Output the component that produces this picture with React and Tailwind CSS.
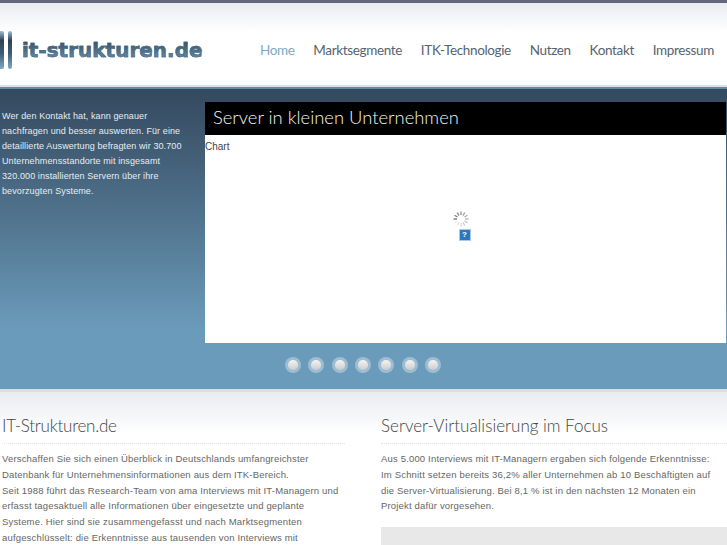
const navItems = ["Home", "Marktsegmente", "ITK-Technologie", "Nutzen", "Kontakt", "Impressum"]
const dots = [0, 1, 2, 3, 4, 5, 6]

const Logo = () => (
  <div className="flex items-center h-[40px]">
    <svg width="16" height="40" viewBox="0 0 16 40" className="shrink-0">
      <defs>
        <linearGradient id="bar" x1="0" y1="0" x2="0" y2="1">
          <stop offset="0" stopColor="#9cc0da" />
          <stop offset="0.25" stopColor="#2f4154" />
          <stop offset="0.6" stopColor="#3f5f78" />
          <stop offset="1" stopColor="#7fa9c6" />
        </linearGradient>
      </defs>
      <rect x="-2" y="1" width="6" height="38" rx="2" fill="url(#bar)" />
      <rect x="8" y="1" width="4" height="38" rx="2" fill="url(#bar)" />
    </svg>
    <span className="ml-[6px] whitespace-nowrap font-['DejaVu_Sans'] font-bold text-[20px] leading-[26px] [-webkit-text-stroke:0.5px_#47677f] bg-gradient-to-b from-[#2f4356] to-[#6d9cbc] bg-clip-text text-transparent">
      it-strukturen.de
    </span>
  </div>
)

const Spinner = () => (
  <svg width="18" height="18" viewBox="0 0 18 18">
    {[0, 30, 60, 90, 120, 150, 180, 210, 240, 270, 300, 330].map((a, i) => (
      <line
        key={a}
        x1="9"
        y1="1.5"
        x2="9"
        y2="5"
        stroke="#777"
        strokeWidth="1.4"
        strokeOpacity={1 - i * 0.08}
        transform={`rotate(${a - 90} 9 9)`}
      />
    ))}
  </svg>
)

export default function App() {
  return (
    <div className="w-[727px] h-[545px] overflow-hidden bg-white font-['Liberation_Sans',sans-serif]">
      <div className="h-[3px] bg-[#66657a]" />
      <header className="h-[82px] bg-gradient-to-b from-[#e9ecef] via-white via-[35%] to-white flex items-center justify-between pt-[12px] pr-[13px]">
        <Logo />
        <nav className="flex gap-[18.8px] whitespace-nowrap font-['Lato',sans-serif] text-[13.5px] tracking-[-0.35px] text-[#55646f]">
          {navItems.map((item, i) => (
            <span key={item} className={i === 0 ? "text-[#7fa9c6]" : ""}>
              {item}
            </span>
          ))}
        </nav>
      </header>
      <div className="h-[2px] bg-[#dfe1e2]" />
      <div className="h-[2px] bg-[#5f8ba6]" />

      <section className="h-[300px] bg-gradient-to-b from-[#34495e] to-[#6b9bba] to-[80%] pt-[13px] flex flex-col">
        <div className="flex">
          <p className="w-[205px] shrink-0 pl-[2px] pr-[18px] pt-[7px] text-[9px] leading-[15px] tracking-[0.1px] text-[#e6edf2]">
            Wer den Kontakt hat, kann genauer nachfragen und besser auswerten. Für eine detaillierte Auswertung befragten wir 30.700 Unternehmensstandorte mit insgesamt 320.000 installierten Servern über ihre bevorzugten Systeme.
          </p>
          <div className="w-[521px] h-[241px] bg-white flex flex-col">
            <div className="h-[33px] bg-black text-[#f5f5f5] font-['Lato',sans-serif] font-light text-[18.4px] leading-[30px] pl-[8px]">
              Server in kleinen Unternehmen
            </div>
            <div className="text-[10px] leading-[12px] pt-[6px] text-[#444]">Chart</div>
            <div className="flex flex-col items-center mt-[57px] ml-[-10px]">
              <Spinner />
              <div className="w-[12px] h-[12px] mt-[1px] ml-[8px] bg-[#2b78c2] border border-[#a9c9e8] text-white text-[8px] leading-[10px] text-center font-bold">
                ?
              </div>
            </div>
          </div>
        </div>
        <div className="flex justify-center gap-[7.4px] mt-[14px] pr-[1px]">
          {dots.map((d) => (
            <div key={d} className="w-[16px] h-[16px] rounded-full bg-[#9dbdd2] flex items-center justify-center">
              <div className="w-[10px] h-[10px] rounded-full bg-gradient-to-b from-[#f4f4f4] to-[#cccccc]" />
            </div>
          ))}
        </div>
      </section>

      <div className="h-[3px] bg-[#dcdedf]" />
      <main className="h-[153px] bg-gradient-to-b from-[#e9ecef] via-white via-[28%] to-white flex pt-[22px]">
        <div className="w-[345px] pl-[2px] shrink-0">
          <h2 className="font-['Lato',sans-serif] font-light text-[17px] tracking-[-0.25px] leading-[24px] text-[#444] h-[30px] border-b border-dotted border-[#e4e4e4]">
            IT-Strukturen.de
          </h2>
          <p className="mt-[7px] w-[343px] text-[9.5px] leading-[15.8px] tracking-[0.17px] text-[#666]">
            Verschaffen Sie sich einen Überblick in Deutschlands umfangreichster
            <br />
            Datenbank für Unternehmensinformationen aus dem ITK-Bereich.
            <br />
            Seit 1988 führt das Research-Team von ama Interviews mit IT-Managern und erfasst tagesaktuell alle Informationen über eingesetzte und geplante
            <br />
            Systeme. Hier sind sie zusammengefasst und nach Marktsegmenten
            <br />
            aufgeschlüsselt: die Erkenntnisse aus tausenden von Interviews mit
          </p>
        </div>
        <div className="ml-[36px] flex-1">
          <h2 className="font-['Lato',sans-serif] font-light text-[17px] leading-[24px] text-[#444] h-[30px] border-b border-dotted border-[#e4e4e4]">
            Server-Virtualisierung im Focus
          </h2>
          <p className="mt-[7px] text-[9.5px] leading-[15.8px] tracking-[0.17px] text-[#666] w-[335px]">
            Aus 5.000 Interviews mit IT-Managern ergaben sich folgende Erkenntnisse: Im Schnitt setzen bereits 36,2% aller Unternehmen ab 10 Beschäftigten auf die Server-Virtualisierung. Bei 8,1 % ist in den nächsten 12 Monaten ein Projekt dafür vorgesehen.
          </p>
          <div className="mt-[13px] h-[40px] bg-[#e8e8e8]" />
        </div>
      </main>
    </div>
  )
}
